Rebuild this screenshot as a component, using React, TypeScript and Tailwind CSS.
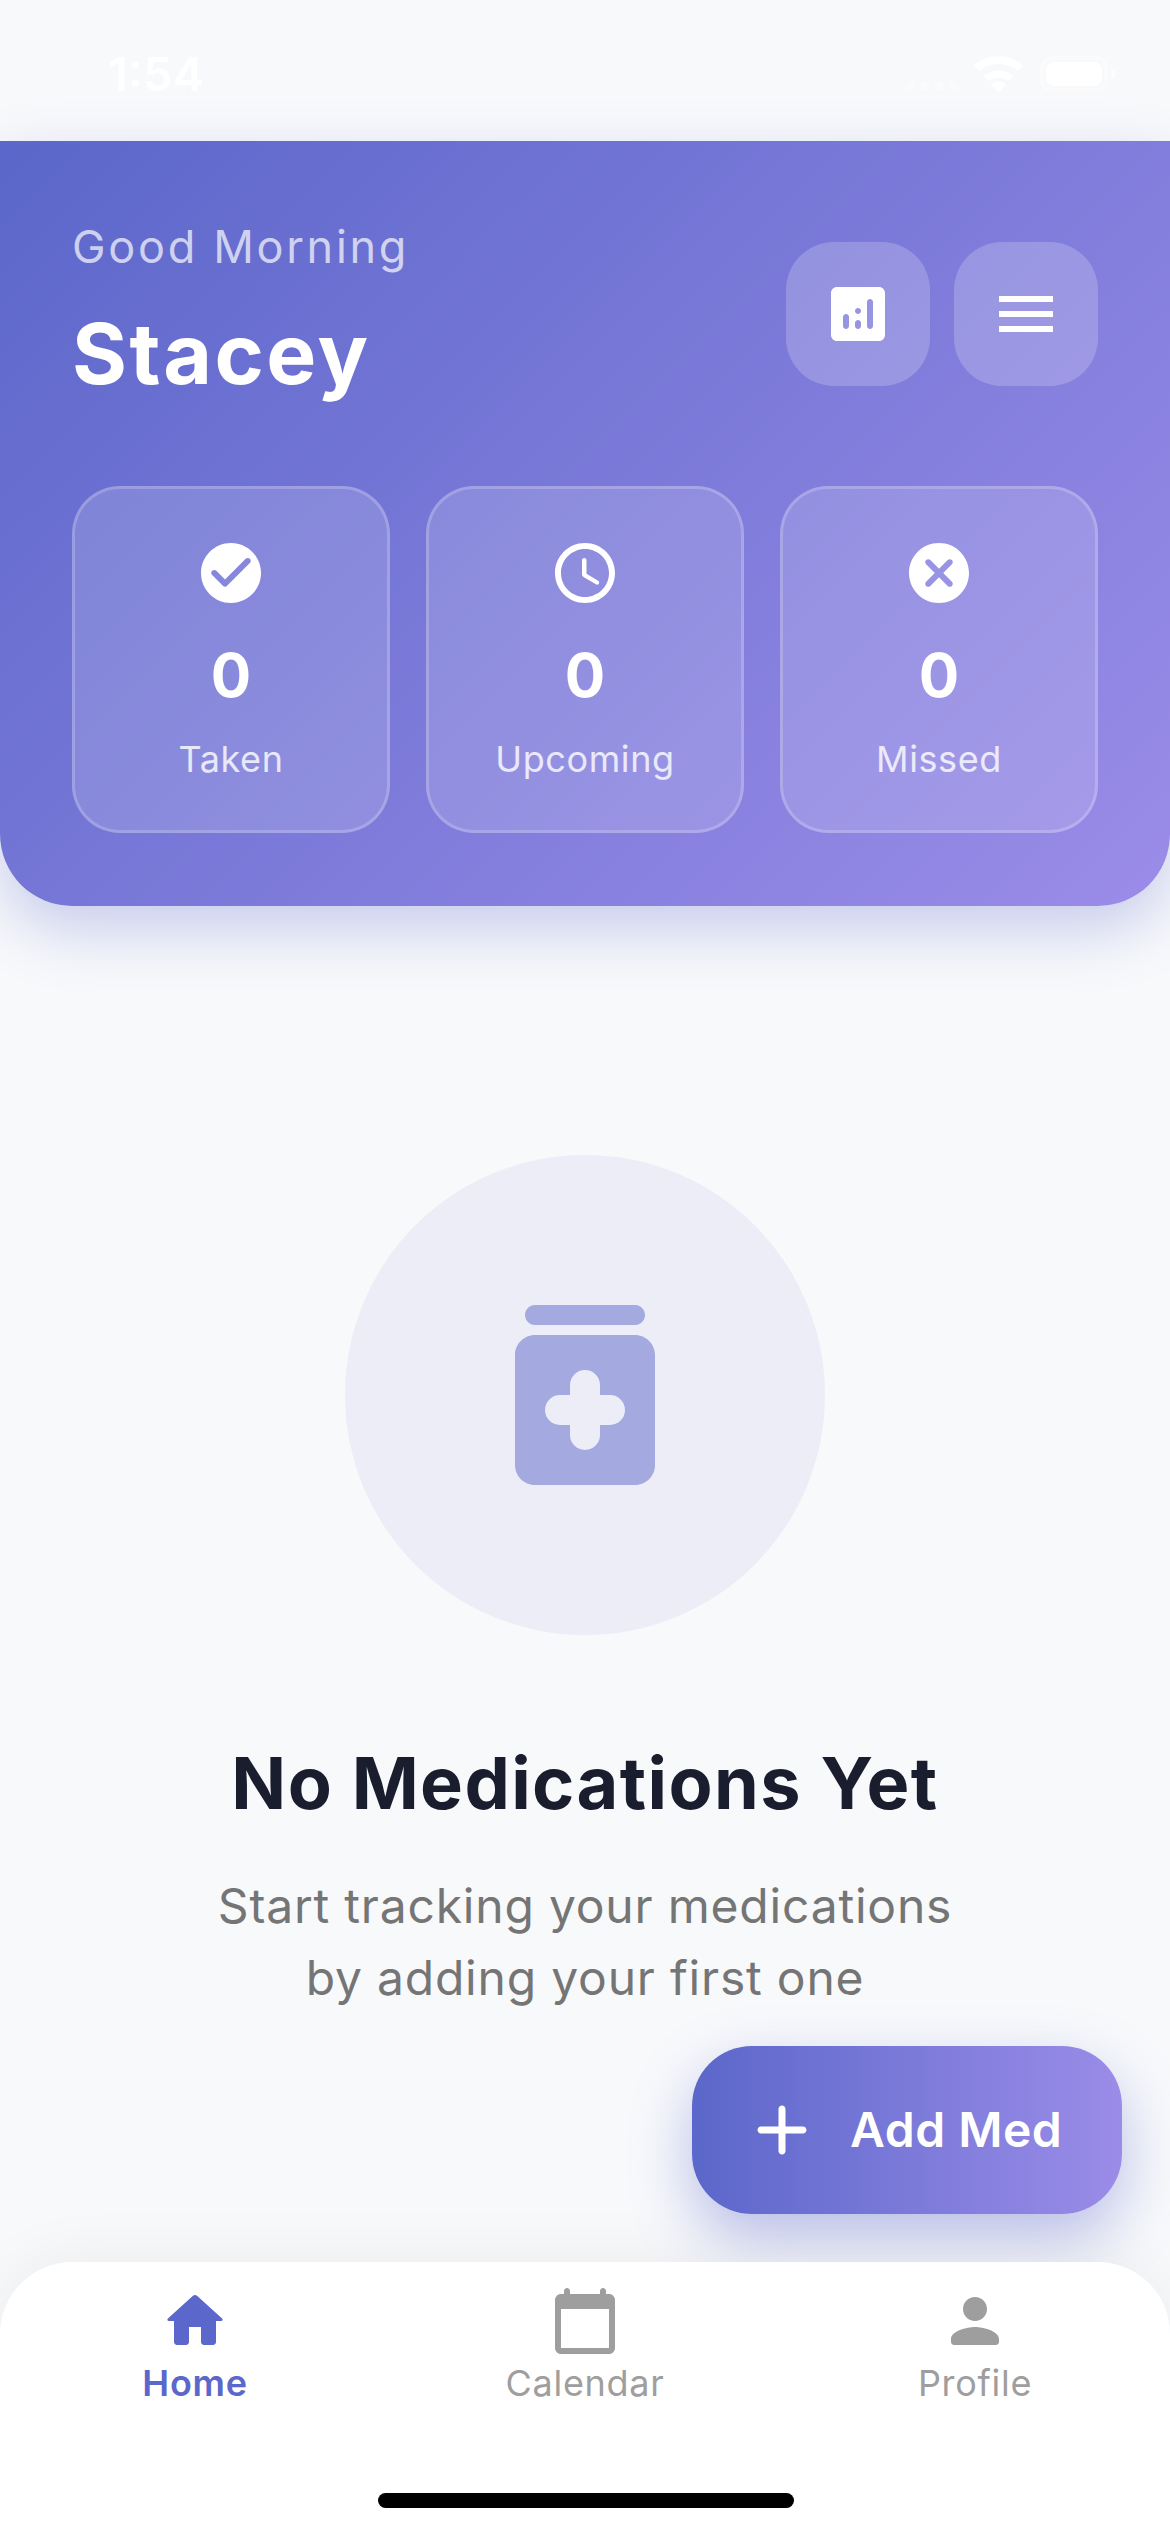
const gradient = "bg-[linear-gradient(135deg,#5b67ca,#9b8ce8)]";

function Icon({ d, className }: { d: string; className: string }) {
  return (
    <svg viewBox="0 0 24 24" className={className} fill="currentColor" fillRule="evenodd">
      <path d={d} />
    </svg>
  );
}

const icons = {
  check:
    "M12 2C6.48 2 2 6.48 2 12s4.48 10 10 10 10-4.48 10-10S17.52 2 12 2zM9.29 16.29 5.7 12.7c-.39-.39-.39-1.02 0-1.41.39-.39 1.02-.39 1.41 0L10 14.17l6.88-6.88c.39-.39 1.02-.39 1.41 0 .39.39.39 1.02 0 1.41l-7.59 7.59c-.38.39-1.02.39-1.41 0z",
  clock:
    "M11.99 2C6.47 2 2 6.48 2 12s4.47 10 9.99 10C17.52 22 22 17.52 22 12S17.52 2 11.99 2zM12 20c-4.42 0-8-3.58-8-8s3.58-8 8-8 8 3.58 8 8-3.58 8-8 8zm-.22-13h-.06c-.4 0-.72.32-.72.72v4.72c0 .35.18.68.49.86l4.15 2.49c.34.2.78.1.98-.24.21-.34.1-.79-.25-.99l-3.87-2.3V7.72c0-.4-.32-.72-.72-.72z",
  cancel:
    "M12 2C6.47 2 2 6.47 2 12s4.47 10 10 10 10-4.47 10-10S17.53 2 12 2zm4.3 14.3c-.39.39-1.02.39-1.41 0L12 13.41 9.11 16.3c-.39.39-1.02.39-1.41 0-.39-.39-.39-1.02 0-1.41L10.59 12 7.7 9.11c-.39-.39-.39-1.02 0-1.41.39-.39 1.02-.39 1.41 0L12 10.59l2.89-2.89c.39-.39 1.02-.39 1.41 0 .39.39.39 1.02 0 1.41L13.41 12l2.89 2.89c.38.38.38 1.02 0 1.41z",
  analytics:
    "M19 3H5c-1.1 0-2 .9-2 2v14c0 1.1.9 2 2 2h14c1.1 0 2-.9 2-2V5c0-1.1-.9-2-2-2zM8 17c-.55 0-1-.45-1-1v-3c0-.55.45-1 1-1s1 .45 1 1v3c0 .55-.45 1-1 1zm4 0c-.55 0-1-.45-1-1v-1c0-.55.45-1 1-1s1 .45 1 1v1c0 .55-.45 1-1 1zm0-5c-.55 0-1-.45-1-1s.45-1 1-1 1 .45 1 1-.45 1-1 1zm4 5c-.55 0-1-.45-1-1V8c0-.55.45-1 1-1s1 .45 1 1v8c0 .55-.45 1-1 1z",
  menu: "M3 6h18v2H3zM3 11h18v2H3zM3 16h18v2H3z",
  medication:
    "M7 3h10c.55 0 1 .45 1 1s-.45 1-1 1H7c-.55 0-1-.45-1-1s.45-1 1-1zM7 6h10c1.1 0 2 .9 2 2v11c0 1.1-.9 2-2 2H7c-1.1 0-2-.9-2-2V8c0-1.1.9-2 2-2zM10.5 11a1.5 1.5 0 0 1 3 0v1h1a1.5 1.5 0 0 1 0 3h-1v1a1.5 1.5 0 0 1-3 0v-1h-1a1.5 1.5 0 0 1 0-3h1z",
  add: "M18 13h-5v5c0 .55-.45 1-1 1s-1-.45-1-1v-5H6c-.55 0-1-.45-1-1s.45-1 1-1h5V6c0-.55.45-1 1-1s1 .45 1 1v5h5c.55 0 1 .45 1 1s-.45 1-1 1z",
  home: "M10 19v-5h4v5c0 .55.45 1 1 1h3c.55 0 1-.45 1-1v-7h1.7c.46 0 .68-.57.33-.87L12.67 3.6c-.38-.34-.96-.34-1.34 0l-8.36 7.53c-.34.3-.13.87.33.87H5v7c0 .55.45 1 1 1h3c.55 0 1-.45 1-1z",
  calendar:
    "M20 3h-1V2c0-.55-.45-1-1-1s-1 .45-1 1v1H7V2c0-.55-.45-1-1-1s-1 .45-1 1v1H4c-1.1 0-2 .9-2 2v16c0 1.1.9 2 2 2h16c1.1 0 2-.9 2-2V5c0-1.1-.9-2-2-2zm0 18H4V8h16v13z",
  person:
    "M12 12c2.21 0 4-1.79 4-4s-1.79-4-4-4-4 1.79-4 4 1.79 4 4 4zm0 2c-2.67 0-8 1.34-8 4v1c0 .55.45 1 1 1h14c.55 0 1-.45 1-1v-1c0-2.66-5.33-4-8-4z",
};

function StatusBar() {
  return (
    <div className="h-[141px] shrink-0 flex items-center justify-between pl-[108px] pr-[54px] pt-[6px] text-white">
      <span className="text-[47px] leading-none font-semibold">1:54</span>
      <div className="flex items-center gap-[17px]">
        <div className="flex gap-[6px] self-end mb-[2px] opacity-40">
          <span className="w-[8px] h-[8px] rounded-[2px] bg-white" />
          <span className="w-[8px] h-[8px] rounded-[2px] bg-white" />
          <span className="w-[8px] h-[8px] rounded-[2px] bg-white" />
          <span className="w-[8px] h-[8px] rounded-[2px] bg-white" />
        </div>
        <svg viewBox="0 0 49 36" className="w-[49px] h-[36px]" fill="currentColor">
          <path d="M0 9.5C13-3 36-3 49 9.5L44 15C33 5.5 16 5.5 5 15z" />
          <path d="M9.5 20C17 12.5 32 12.5 39.5 20L34.5 25.5C29 20.5 20 20.5 14.5 25.5z" />
          <path d="M17 29C21 24 28 24 32 29L24.5 36z" />
        </svg>
        <div className="flex items-center gap-[3px]">
          <div className="w-[68px] h-[36px] rounded-[12px] border-[4px] border-white/40 p-[2px]">
            <div className="w-full h-full rounded-[7px] bg-white" />
          </div>
          <div className="w-[5px] h-[10px] rounded-r-full bg-white/60" />
        </div>
      </div>
    </div>
  );
}

function IconButton({ d }: { d: string }) {
  return (
    <button className="w-[144px] h-[144px] rounded-[48px] bg-white/20 flex items-center justify-center text-white">
      <Icon d={d} className="w-[72px] h-[72px]" />
    </button>
  );
}

function StatCard({ d, label }: { d: string; label: string }) {
  return (
    <div className="h-[347px] rounded-[48px] bg-white/15 border-[3px] border-white/20 flex flex-col items-center pt-[48px] text-white">
      <Icon d={d} className="w-[72px] h-[72px]" />
      <div className="mt-[30px] text-[60px] leading-[72px] font-bold">0</div>
      <div className="mt-[26px] text-[36px] leading-[44px] tracking-[0.6px] text-white/80">{label}</div>
    </div>
  );
}

function Header() {
  return (
    <header className={`${gradient} shrink-0 h-[765px] rounded-b-[72px] px-[72px] pt-[79px] shadow-[0_24px_60px_rgba(91,103,202,0.3)] relative z-10`}>
      <div className="flex items-center justify-between">
        <div>
          <p className="text-[45px] leading-[54px] tracking-[2.7px] text-white/70">Good Morning</p>
          <h1 className="mt-[29px] text-[84px] leading-[102px] font-bold tracking-[2.5px] text-white">Stacey</h1>
        </div>
        <div className="flex gap-[24px] mt-[3px]">
          <IconButton d={icons.analytics} />
          <IconButton d={icons.menu} />
        </div>
      </div>
      <div className="grid grid-cols-3 gap-[36px] mt-[81px]">
        <StatCard d={icons.check} label="Taken" />
        <StatCard d={icons.clock} label="Upcoming" />
        <StatCard d={icons.cancel} label="Missed" />
      </div>
    </header>
  );
}

function EmptyState() {
  return (
    <main className="flex-1 flex flex-col items-center pt-[249px]">
      <div className="w-[480px] h-[480px] rounded-full bg-[#ecedf7] flex items-center justify-center text-[#a4aadf]">
        <Icon d={icons.medication} className="w-[240px] h-[240px]" />
      </div>
      <h2 className="mt-[104px] text-[72px] leading-[88px] font-bold tracking-[1.4px] text-[#1a1d2e]">No Medications Yet</h2>
      <p className="mt-[43px] text-[48px] leading-[72px] tracking-[0.8px] text-[#757575] text-center">
        Start tracking your medications
        <br />
        by adding your first one
      </p>
    </main>
  );
}

function NavItem({ d, label, active }: { d: string; label: string; active?: boolean }) {
  return (
    <div className={`flex flex-col items-center ${active ? "text-[#5b67ca]" : "text-[#9e9e9e]"}`}>
      <Icon d={d} className="w-[72px] h-[72px]" />
      <span className={`mt-[4px] text-[36px] leading-[44px] tracking-[0.7px] ${active ? "font-semibold" : ""}`}>{label}</span>
    </div>
  );
}

export default function App() {
  return (
    <div className="relative w-[1170px] h-[2532px] overflow-hidden flex flex-col bg-[#f8f9fb] font-[family-name:Inter,sans-serif]">
      <StatusBar />
      <Header />
      <EmptyState />
      <button className="absolute left-[692px] top-[2046px] w-[430px] h-[168px] rounded-[60px] pl-[48px] flex items-center gap-[26px] text-white bg-[linear-gradient(90deg,#5b67ca,#9b8ce8)] shadow-[0_24px_60px_rgba(91,103,202,0.4)] z-10">
        <Icon d={icons.add} className="w-[84px] h-[84px]" />
        <span className="text-[48px] font-semibold tracking-[0.5px]">Add Med</span>
      </button>
      <nav className="relative shrink-0 h-[270px] bg-white rounded-t-[72px] pt-[23px] grid grid-cols-3 shadow-[0_-6px_60px_rgba(0,0,0,0.05)] z-20">
        <NavItem d={icons.home} label="Home" active />
        <NavItem d={icons.calendar} label="Calendar" />
        <NavItem d={icons.person} label="Profile" />
        <div className="absolute left-[378px] top-[231px] w-[416px] h-[15px] rounded-full bg-black" />
      </nav>
    </div>
  );
}
